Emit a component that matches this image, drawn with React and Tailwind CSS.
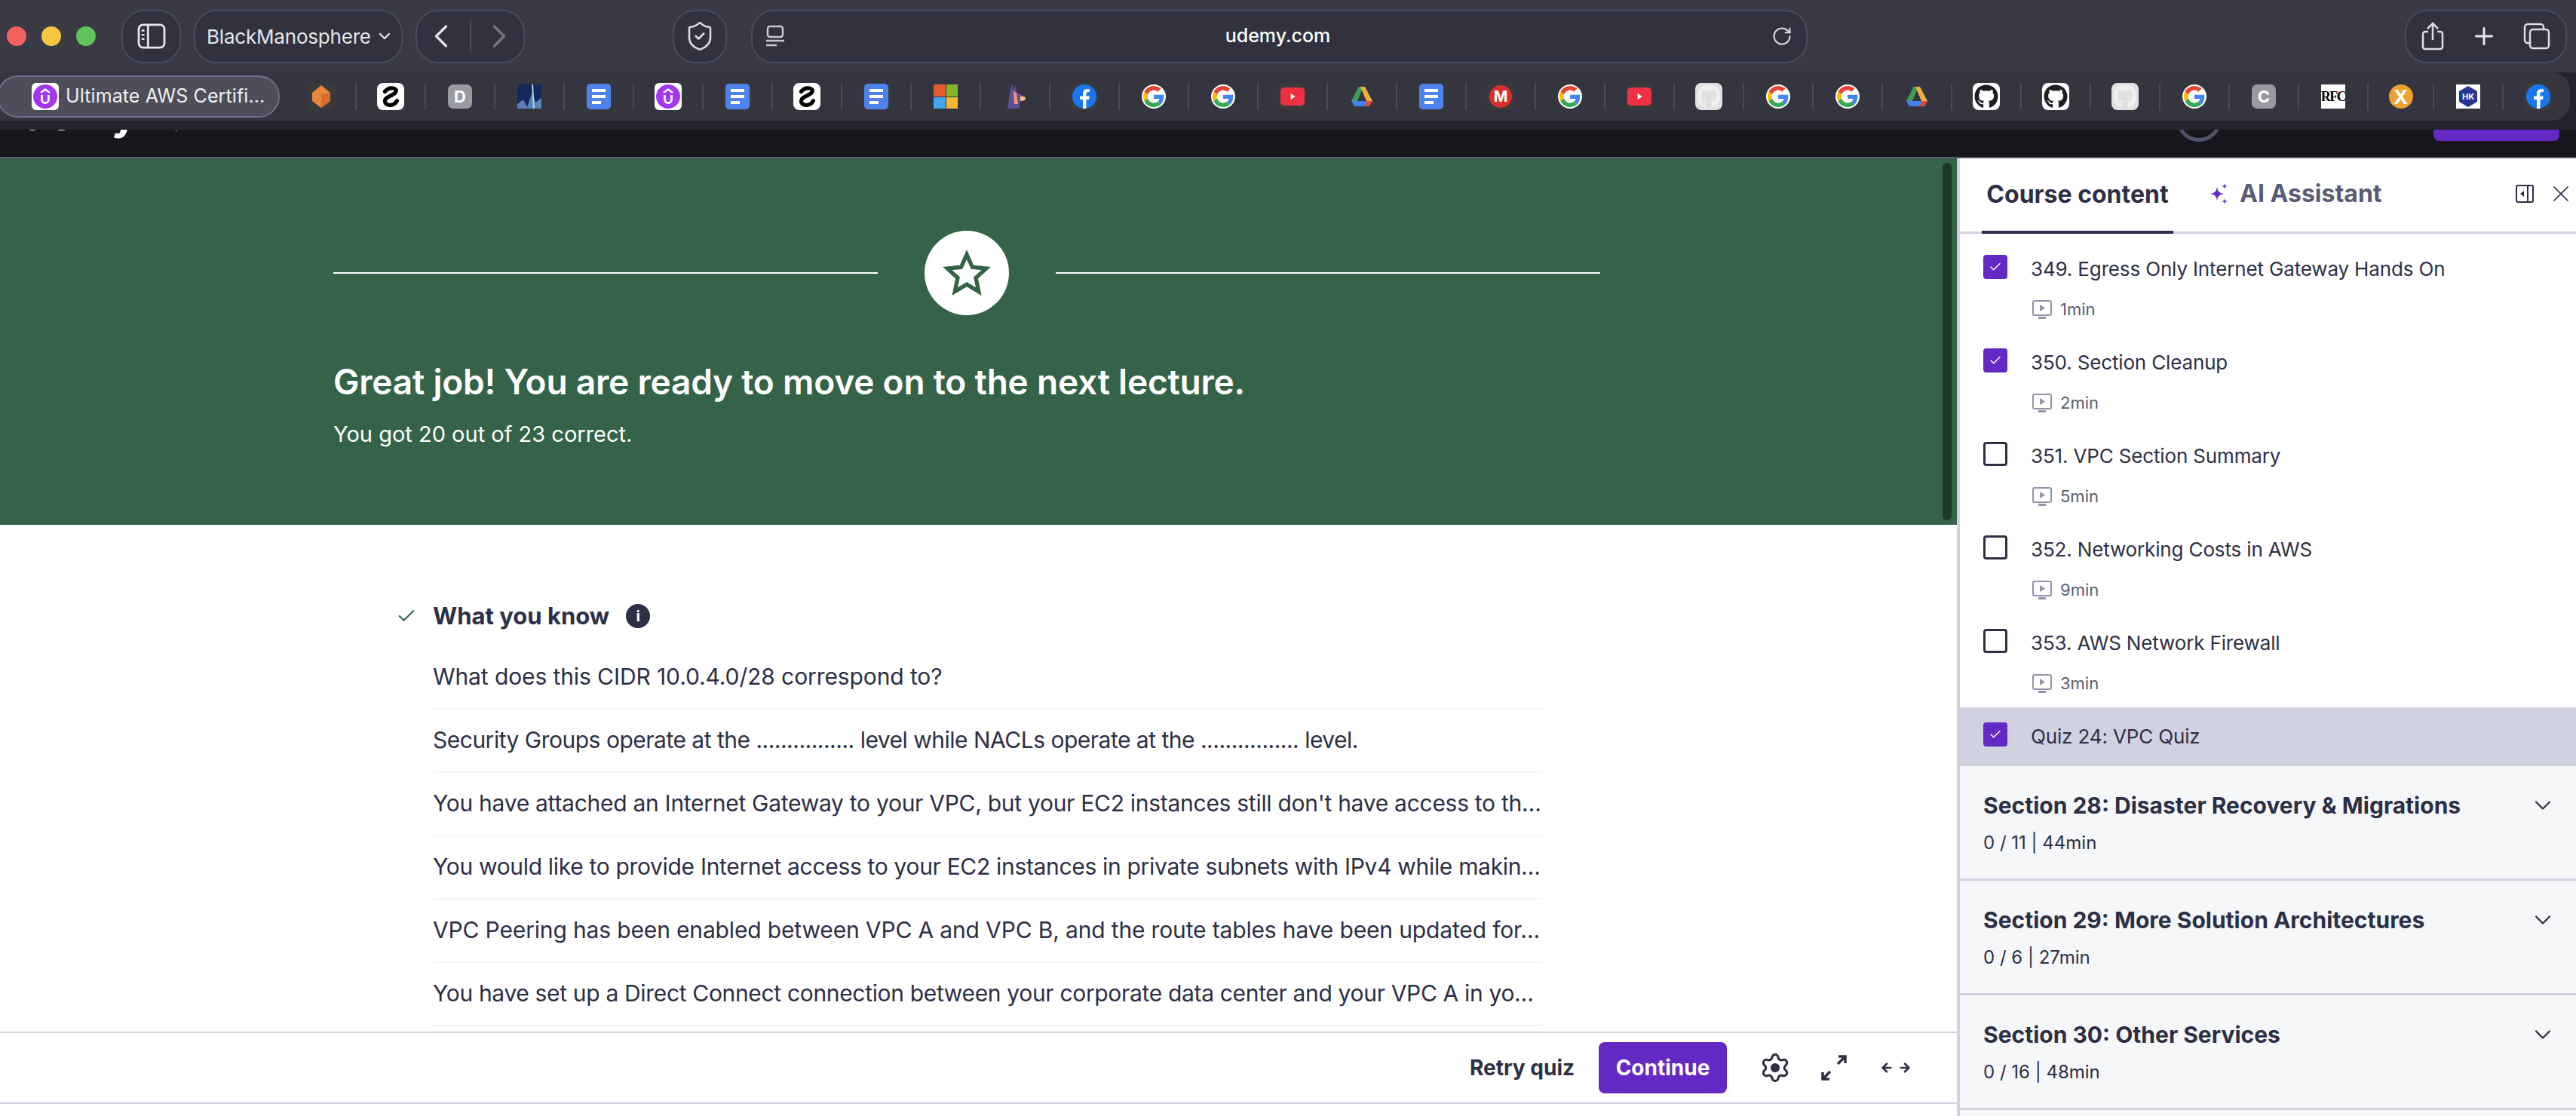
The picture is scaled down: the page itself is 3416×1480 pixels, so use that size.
import React from 'react';
import { ChevronDown, ChevronLeft, ChevronRight, ShieldCheck, RotateCw, Plus, Check, X, ArrowLeft, ArrowRight } from 'lucide-react';
import { FaGithub } from 'react-icons/fa';

function Frame({ className = '', children }) {
  return <div className={`w-[32px] h-[32px] flex items-center justify-center overflow-hidden ${className}`}>{children}</div>;
}

function GoogleIcon() {
  return (
    <Frame className="bg-white rounded-full">
      <svg viewBox="0 0 48 48" className="w-[28px] h-[28px]">
        <path fill="#EA4335" d="M24 9.5c3.5 0 6.700 1.200 9.200 3.600l6.900-6.900C35.900 2.400 30.500 0 24 0 14.600 0 6.500 5.400 2.600 13.200l8 6.200C12.400 13.700 17.700 9.500 24 9.500z" />
        <path fill="#4285F4" d="M46.900 24.500c0-1.600-.1-3.100-.4-4.500H24v9h12.900c-.6 3-2.200 5.500-4.700 7.200l7.700 6c4.500-4.200 7-10.300 7-17.700z" />
        <path fill="#FBBC05" d="M10.500 28.600c-.5-1.400-.8-3-.8-4.600s.3-3.200.8-4.600l-8-6.200C.9 16.500 0 20.100 0 24s.9 7.500 2.600 10.800l7.900-6.200z" />
        <path fill="#34A853" d="M24 48c6.500 0 11.900-2.100 15.900-5.800l-7.700-6c-2.200 1.400-4.900 2.300-8.200 2.300-6.300 0-11.600-4.200-13.500-9.900l-8 6.200C6.500 42.600 14.600 48 24 48z" />
      </svg>
    </Frame>
  );
}

function DocsIcon() {
  return (
    <div className="w-[36px] h-[36px] rounded-[8px] bg-[#3a3a3c] flex items-center justify-center">
      <div className="w-[32px] h-[34px] rounded-[5px] bg-[#4e83ee] flex flex-col justify-center gap-[4px] px-[7px]">
        <div className="h-[4px] bg-white" />
        <div className="h-[4px] bg-white" />
        <div className="h-[4px] w-[12px] bg-white" />
      </div>
    </div>
  );
}

function UdemyIcon() {
  return (
    <div className="w-[36px] h-[36px] rounded-[6px] bg-white flex items-center justify-center shrink-0">
      <svg viewBox="0 0 34 34" className="w-[34px] h-[34px]">
        <circle cx="17" cy="17" r="16" fill="#a435f0" />
        <path d="M11 12 L17 7.500 L23 12" fill="none" stroke="white" strokeWidth="2.500" />
        <path d="M12.500 15 V21 a4.500 4.500 0 0 0 9 0 V15" fill="none" stroke="white" strokeWidth="2.800" />
      </svg>
    </div>
  );
}

function SquiggleIcon() {
  return (
    <div className="w-[36px] h-[36px] rounded-[8px] bg-white flex items-center justify-center">
      <svg viewBox="0 0 34 34" className="w-[32px] h-[32px]">
        <path d="M9 10 C15 2 28 5 24 11 C21 16 9 17 9 23 C9 31 22 31 26 23" fill="none" stroke="black" strokeWidth="5.500" strokeLinecap="round" />
      </svg>
    </div>
  );
}

function YoutubeIcon() {
  return (
    <div className="w-[36px] h-[36px] rounded-[8px] bg-[#3a3a3c] flex items-center justify-center">
      <div className="w-[32px] h-[24px] rounded-[5px] bg-[#ee3142] flex items-center justify-center">
        <svg viewBox="0 0 10 10" className="w-[12px] h-[12px]"><path d="M3 1.500 L8 5 L3 8.500 Z" fill="white" /></svg>
      </div>
    </div>
  );
}

function DriveIcon() {
  return (
    <svg viewBox="0 0 32 32" className="w-[32px] h-[32px]">
      <path d="M11.500 3 H18 L10 22 H2 Z" fill="#3f9b55" />
      <path d="M14 3 H20 L30 22 H22 Z" fill="#eeb03c" />
      <path d="M2 22 H22 L20 29 H6 Z" fill="#4482ed" />
      <path d="M22 22 H30 L26 29 H20 Z" fill="#d9503f" />
    </svg>
  );
}

function FacebookIcon() {
  return (
    <div className="w-[36px] h-[36px] rounded-[8px] bg-[#3a3a3c] flex items-center justify-center">
      <svg viewBox="0 0 32 32" className="w-[32px] h-[32px]">
        <circle cx="16" cy="16" r="16" fill="#1877f2" />
        <path d="M14 32 V20 H10 V15.500 H14 V12 C14 8 16.500 6 20 6 L23 6.300 V10 H21 C19 10 18.500 11 18.500 12.500 V15.500 H22.800 L22 20 H18.500 V32 Z" fill="white" />
      </svg>
    </div>
  );
}

function GithubIcon({ ghost }) {
  return (
    <div className={`w-[36px] h-[36px] rounded-[8px] flex items-center justify-center ${ghost ? 'bg-[#e1e1e1]' : 'bg-white'}`}>
      <FaGithub className={`w-[32px] h-[32px] ${ghost ? 'text-[#f0f0f0]' : 'text-[#1b1f23]'}`} />
    </div>
  );
}

function Favicon({ name }) {
  switch (name) {
    case 'crystal':
      return (
        <div className="w-[36px] h-[36px] rounded-[8px] bg-[#3a3a3c] flex items-center justify-center">
          <svg viewBox="0 0 32 32" className="w-[32px] h-[32px]">
            <path d="M16 1 L28 11 V22 L16 31 L4 22 V11 Z" fill="#e8873a" />
            <path d="M16 13 L28 11 V22 L16 31 Z" fill="#d96a30" />
          </svg>
        </div>
      );
    case 'squiggle':
      return <SquiggleIcon />;
    case 'd':
      return <Frame className="bg-[#9a9aa2] rounded-[7px] text-white font-bold text-[22px]">D</Frame>;
    case 'c':
      return <Frame className="bg-[#9a9aa2] rounded-[7px] text-white font-bold text-[22px]">C</Frame>;
    case 'blue':
      return (
        <svg viewBox="0 0 32 32" className="w-[32px] h-[32px]">
          <rect width="32" height="32" fill="#12295c" />
          <path d="M0 26 L8 20 L13 30 L20 10 L24 24 L32 18 V32 H0 Z" fill="#5b82b8" />
          <path d="M20 0 L22 32" stroke="#b8cfe6" strokeWidth="2" />
        </svg>
      );
    case 'docs':
      return <DocsIcon />;
    case 'udemy':
      return <UdemyIcon />;
    case 'ms':
      return (
        <div className="w-[32px] h-[32px] grid grid-cols-2 gap-[1px]">
          <div className="bg-[#e45c30]" />
          <div className="bg-[#86b42f]" />
          <div className="bg-[#44a6ee]" />
          <div className="bg-[#f7b733]" />
        </div>
      );
    case 'llama':
      return (
        <svg viewBox="0 0 32 32" className="w-[32px] h-[32px]">
          <path d="M6 32 L10 6 L12 0 L14 8 L16 0 L18 10 L26 15 L30 17 L29 21 L22 23 L22 32 Z" fill="#5c4f96" />
          <path d="M14 8 L18 12 L20 26 H15 Z" fill="#ee8f80" />
          <path d="M23 15 L30 17 L29 21 L23 22 Z" fill="#f0c27a" />
        </svg>
      );
    case 'fb':
      return <FacebookIcon />;
    case 'g':
      return <GoogleIcon />;
    case 'yt':
      return <YoutubeIcon />;
    case 'drive':
      return <DriveIcon />;
    case 'mega':
      return (
        <div className="w-[36px] h-[36px] rounded-[8px] bg-[#3a3a3c] flex items-center justify-center">
          <div className="w-[30px] h-[30px] rounded-full bg-[#d9302a] flex items-center justify-center text-white font-bold text-[20px]">M</div>
        </div>
      );
    case 'gh':
      return <GithubIcon />;
    case 'ghost':
      return <GithubIcon ghost />;
    case 'rfc':
      return <Frame className="bg-white text-black font-bold text-[18px] font-['Liberation_Serif',serif] tracking-[-1.5px]">RFC</Frame>;
    case 'x':
      return <Frame className="bg-[#f0a030] rounded-full text-white font-bold text-[26px]">X</Frame>;
    case 'hk':
      return (
        <Frame className="bg-white">
          <svg viewBox="0 0 32 32" className="w-[32px] h-[32px]">
            <path d="M16 2 L28 9 V23 L16 30 L4 23 V9 Z" fill="#25388e" />
            <text x="16" y="20" fontSize="11" fontWeight="700" fill="white" textAnchor="middle">HK</text>
          </svg>
        </Frame>
      );
    default:
      return null;
  }
}

const tabs = [
  'crystal', 'squiggle', 'd', 'blue', 'docs', 'udemy', 'docs', 'squiggle', 'docs', 'ms', 'llama',
  'fb', 'g', 'g', 'yt', 'drive', 'docs', 'mega', 'g', 'yt', 'ghost', 'g', 'g', 'drive', 'gh', 'gh',
  'ghost', 'g', 'c', 'rfc', 'x', 'hk', 'fb',
];

function SidebarIcon() {
  return (
    <svg viewBox="0 0 40 36" className="w-[38px] h-[34px]" fill="none" stroke="#e4e4e8" strokeWidth="3">
      <rect x="2" y="2" width="36" height="32" rx="6" />
      <path d="M15 2 V34" />
      <path d="M6 10 H10 M6 16 H10 M6 22 H10" strokeWidth="2.500" />
    </svg>
  );
}

function ReaderIcon() {
  return (
    <svg viewBox="0 0 24 30" className="w-[24px] h-[30px]" fill="none" stroke="#c8c8cf" strokeWidth="2.500">
      <rect x="2" y="2" width="20" height="14" rx="3" />
      <path d="M0 21 H24 M0 27 H14" />
    </svg>
  );
}

function ShareIcon() {
  return (
    <svg viewBox="0 0 30 38" className="w-[30px] h-[38px]" fill="none" stroke="#dedee2" strokeWidth="2.500">
      <path d="M9 13 H5 a3 3 0 0 0 -3 3 V33 a3 3 0 0 0 3 3 H25 a3 3 0 0 0 3 -3 V16 a3 3 0 0 0 -3 -3 H21" />
      <path d="M15 24 V2 M8 9 L15 2 L22 9" />
    </svg>
  );
}

function TabsIcon() {
  return (
    <svg viewBox="0 0 36 36" className="w-[36px] h-[36px]" fill="none" stroke="#dedee2" strokeWidth="2.500">
      <rect x="9" y="9" width="25" height="25" rx="4" />
      <path d="M9 27 H6 a4 4 0 0 1 -4 -4 V6 a4 4 0 0 1 4 -4 H23 a4 4 0 0 1 4 4 V9" />
    </svg>
  );
}

function ToolbarPill({ className = '', children }) {
  return (
    <div className={`h-[71px] rounded-[30px] border-2 border-[#484a62] bg-[#31323d] flex items-center ${className}`}>
      {children}
    </div>
  );
}

function BrowserChrome() {
  return (
    <div className="bg-[#23232d]">
      <div className="h-[96px] bg-[#3a3a44] flex items-center pl-[9px]">
        <div className="flex gap-[20px]">
          <div className="w-[26px] h-[26px] rounded-full bg-[#f0625f]" />
          <div className="w-[26px] h-[26px] rounded-full bg-[#f6c73f]" />
          <div className="w-[26px] h-[26px] rounded-full bg-[#60c45c]" />
        </div>
        <ToolbarPill className="w-[79px] ml-[34px] justify-center"><SidebarIcon /></ToolbarPill>
        <ToolbarPill className="w-[277px] ml-[17px] pl-[15px] gap-[6px] text-[#e6e6ea] text-[26px]">
          <span className="tracking-[-0.2px]">BlackManosphere</span>
          <ChevronDown className="w-[24px] h-[24px]" strokeWidth={2.25} />
        </ToolbarPill>
        <ToolbarPill className="w-[145px] ml-[17px] justify-between px-[6px]">
          <ChevronLeft className="w-[52px] h-[52px] text-[#e6e6ea]" strokeWidth={1.5} />
          <div className="w-[2px] h-[44px] bg-[#4a4b58]" />
          <ChevronRight className="w-[52px] h-[52px] text-[#77777f]" strokeWidth={1.5} />
        </ToolbarPill>
        <ToolbarPill className="w-[72px] ml-[196px] justify-center">
          <ShieldCheck className="w-[42px] h-[42px] text-[#d8d8dc]" strokeWidth={1.5} />
        </ToolbarPill>
        <ToolbarPill className="w-[1401px] ml-[32px] px-[18px] justify-between text-white text-[25px]">
          <ReaderIcon />
          <span className="font-medium">udemy.com</span>
          <RotateCw className="w-[28px] h-[28px] text-[#d8d8dc]" strokeWidth={1.75} />
        </ToolbarPill>
        <ToolbarPill className="w-[215px] ml-[792px] justify-between px-[20px]">
          <ShareIcon />
          <Plus className="w-[36px] h-[36px] text-[#e6e6ea]" strokeWidth={2} />
          <TabsIcon />
        </ToolbarPill>
      </div>
      <div className="h-[64px] mr-[8px] bg-[#35353f] rounded-r-[24px] flex items-center">
        <div className="w-[375px] h-[56px] -ml-[4px] mr-[10px] rounded-[28px] border-2 border-[#6e6e8c] bg-[#4e4e5a] flex items-center pl-[44px] gap-[9px] text-[#eeeef0] text-[25px] tracking-[0.1px] shrink-0">
          <UdemyIcon />
          <span className="whitespace-nowrap">Ultimate AWS Certifi...</span>
        </div>
        {tabs.map((name, i) => (
          <div key={i} className={`h-[36px] flex items-center justify-center shrink-0 ${i === 30 ? 'w-[87px]' : 'w-[92px]'} ${i < tabs.length - 1 ? 'border-r-2 border-[#4a4a54]' : ''}`}>
            <Favicon name={name} />
          </div>
        ))}
      </div>
      <div className="h-[12px]" />
    </div>
  );
}

// What is left of the site's own nav, mostly hidden behind the tab bar
function SiteNavStrip() {
  return (
    <div className="h-[38px] bg-[#16161c] border-b-2 border-[#5a5a70] relative overflow-hidden shrink-0">
      <span className="absolute left-[-6px] top-[-54px] text-white font-bold text-[56px] leading-[68px]">udemy</span>
      <div className="absolute left-[233px] top-0 w-[1px] h-[3px] bg-[#8a8a98]" />
      <div className="absolute left-[2886px] top-[-44px] w-[60px] h-[60px] rounded-full border-[5px] border-[#50526a]" />
      <div className="absolute left-[3227px] top-[-20px] w-[167px] h-[35px] rounded-b-[8px] bg-[#6429c5]" />
    </div>
  );
}

function Hero() {
  return (
    <div className="h-[486px] bg-[#356347] pl-[442px] relative text-white">
      <div className="flex items-center gap-[62px] pt-[96px] w-[1680px]">
        <div className="flex-1 h-[2px] bg-white" />
        <div className="w-[112px] h-[112px] rounded-full bg-white flex items-center justify-center shrink-0">
          <svg viewBox="0 0 24 24" className="w-[64px] h-[64px]" fill="none" stroke="#356347" strokeWidth="2" strokeLinejoin="miter">
            <path d="M12 2.800 L14.800 9.100 L21.600 9.800 L16.500 14.400 L17.900 21.200 L12 17.700 L6.100 21.200 L7.500 14.400 L2.400 9.800 L9.200 9.100 Z" />
          </svg>
        </div>
        <div className="flex-1 h-[2px] bg-white" />
      </div>
      <h1 className="mt-[60px] text-[46px] leading-[56px] font-semibold tracking-[-0.2px] whitespace-nowrap">Great job! You are ready to move on to the next lecture.</h1>
      <p className="mt-[24px] text-[29px] leading-[36px] whitespace-nowrap">You got 20 out of 23 correct.</p>
      <div className="absolute right-[7px] top-[6px] w-[12px] h-[474px] rounded-full bg-[#1d3a24]" />
    </div>
  );
}

// tracking per line keeps each line ending where the reference cuts it
const questions = [
  { text: 'What does this CIDR 10.0.4.0/28 correspond to?', tracking: 'tracking-[-0.1px]' },
  { text: 'Security Groups operate at the ................ level while NACLs operate at the ................ level.', tracking: 'tracking-[-0.5px]' },
  { text: "You have attached an Internet Gateway to your VPC, but your EC2 instances still don't have access to th…", tracking: 'tracking-[-0.28px]' },
  { text: 'You would like to provide Internet access to your EC2 instances in private subnets with IPv4 while makin…', tracking: 'tracking-[-0.32px]' },
  { text: 'VPC Peering has been enabled between VPC A and VPC B, and the route tables have been updated for…', tracking: 'tracking-[-0.15px]' },
  { text: 'You have set up a Direct Connect connection between your corporate data center and your VPC A in yo…', tracking: 'tracking-[-0.33px]' },
];

function Results() {
  return (
    <div className="flex-1 bg-white pl-[525px] pt-[99px] overflow-hidden">
      <div className="flex items-center h-[44px]">
        <Check className="w-[28px] h-[28px] text-[#356347] mr-[21px]" strokeWidth={1.75} />
        <span className="text-[#2d2f45] font-bold text-[31px]">What you know</span>
        <div className="ml-[22px] w-[32px] h-[32px] rounded-full bg-[#2d2f45] flex items-center justify-center text-white text-[20px] font-bold">i</div>
      </div>
      <div className="ml-[49px] w-[1471px] mt-[18px]">
        {questions.map((q) => (
          <div key={q.text} className={`h-[84px] border-b-2 border-[#f6f7f9] flex items-center text-[#2d2f45] text-[30px] whitespace-nowrap pb-[2px] ${q.tracking}`}>
            {q.text}
          </div>
        ))}
      </div>
    </div>
  );
}

function ExpandIcon() {
  return (
    <svg viewBox="0 0 36 36" className="w-[36px] h-[36px]" fill="none" stroke="#2d2f45" strokeWidth="3.500">
      <path d="M24 3 H33 V12 M33 3 L23 13" />
      <path d="M12 33 H3 V24 M3 33 L13 23" />
    </svg>
  );
}

function GearIcon() {
  return (
    <svg viewBox="0 0 24 24" className="w-[42px] h-[42px]" fill="none" stroke="#2d2f45" strokeWidth="1.75">
      <path d="M9.671 4.136a2.34 2.34 0 0 1 4.659 0 2.34 2.34 0 0 0 3.319 1.915 2.34 2.34 0 0 1 2.33 4.033 2.34 2.34 0 0 0 0 3.831 2.34 2.34 0 0 1-2.33 4.033 2.34 2.34 0 0 0-3.319 1.915 2.34 2.34 0 0 1-4.659 0 2.34 2.34 0 0 0-3.32-1.915 2.34 2.34 0 0 1-2.33-4.033 2.34 2.34 0 0 0 0-3.831A2.34 2.34 0 0 1 6.35 6.051a2.34 2.34 0 0 0 3.319-1.915" />
      <circle cx="12" cy="12" r="3.500" fill="#2d2f45" stroke="none" />
    </svg>
  );
}

function BottomBar() {
  return (
    <div className="h-[96px] mb-[16px] border-y-2 border-[#d1d2e0] bg-white flex items-center shrink-0 pl-[1949px]">
      <span className="text-[#2d2f45] font-bold text-[28px] w-[171px]">Retry quiz</span>
      <div className="w-[170px] h-[68px] rounded-[8px] bg-[#6429c5] text-white font-bold text-[28px] flex items-center justify-center">Continue</div>
      <div className="ml-[43px]"><GearIcon /></div>
      <div className="ml-[39px]"><ExpandIcon /></div>
      <div className="ml-[43px] flex gap-[6px] text-[#2d2f45]">
        <ArrowLeft className="w-[18px] h-[18px]" strokeWidth={3.5} />
        <ArrowRight className="w-[18px] h-[18px]" strokeWidth={3.5} />
      </div>
    </div>
  );
}

function PlayIcon() {
  return (
    <svg viewBox="0 0 26 25" className="w-[26px] h-[25px]" fill="none" stroke="#9194ac" strokeWidth="2">
      <rect x="1" y="1" width="24" height="19" rx="2" />
      <path d="M10 6 L17 10.500 L10 15 Z" fill="#9194ac" stroke="none" />
      <path d="M8 23.500 H18" strokeWidth="3" />
    </svg>
  );
}

function Checkbox({ checked }) {
  if (checked) {
    return (
      <div className="w-[32px] h-[32px] rounded-[4px] bg-[#6429c5] flex items-center justify-center shrink-0">
        <Check className="w-[18px] h-[18px] text-white" strokeWidth={2} />
      </div>
    );
  }
  return <div className="w-[32px] h-[32px] rounded-[4px] border-[3px] border-[#2d2f45] bg-white shrink-0" />;
}

const lectures = [
  { title: '349. Egress Only Internet Gateway Hands On', time: '1min', done: true },
  { title: '350. Section Cleanup', time: '2min', done: true },
  { title: '351. VPC Section Summary', time: '5min', done: false },
  { title: '352. Networking Costs in AWS', time: '9min', done: false },
  { title: '353. AWS Network Firewall', time: '3min', done: false },
];

const sections = [
  { title: 'Section 28: Disaster Recovery & Migrations', meta: '0 / 11 | 44min' },
  { title: 'Section 29: More Solution Architectures', meta: '0 / 6 | 27min' },
  { title: 'Section 30: Other Services', meta: '0 / 16 | 48min' },
];

function Sidebar() {
  return (
    <div className="w-[821px] border-l-4 border-[#d1d2e0] bg-white flex flex-col shrink-0">
      <div className="h-[100px] border-b-[3px] border-[#d1d2e0] flex items-end pl-[29px] relative">
        <div className="w-[254px] h-[100px] border-b-[4px] border-[#2d2f45] -mb-[3px] flex items-center justify-center text-[#2d2f45] font-bold text-[32px] whitespace-nowrap">Course content</div>
        <div className="h-[100px] ml-[48px] flex items-center gap-[14px] text-[#595c73] font-bold text-[32px] whitespace-nowrap">
          <svg viewBox="0 0 26 30" className="w-[26px] h-[30px]" fill="#6429c5">
            <path d="M10 6 C11 12 13 14 19 15 C13 16 11 18 10 24 C9 18 7 16 1 15 C7 14 9 12 10 6 Z" />
            <path d="M20 1 C20.500 4 21 4.500 24 5 C21 5.500 20.500 6 20 9 C19.500 6 19 5.500 16 5 C19 4.500 19.500 4 20 1 Z" />
            <path d="M20 21 C20.500 24 21 24.500 24 25 C21 25.500 20.500 26 20 29 C19.500 26 19 25.500 16 25 C19 24.500 19.500 24 20 21 Z" />
          </svg>
          <span>AI Assistant</span>
        </div>
        <div className="absolute right-[2px] top-[29px] flex items-center gap-[18px]">
          <svg viewBox="0 0 24 26" className="w-[24px] h-[26px]" fill="none" stroke="#2d2f45" strokeWidth="2">
            <rect x="1" y="2" width="22" height="22" rx="2" />
            <path d="M16 2 V24" />
            <path d="M11 9 L6 13 L11 17 Z" fill="#2d2f45" stroke="none" />
          </svg>
          <X className="w-[36px] h-[36px] text-[#2d2f45]" strokeWidth={1.1} />
        </div>
      </div>
      <div className="pt-[8px]">
        {lectures.map((l) => (
          <div key={l.title} className="h-[124px] pt-[20px] pl-[31px] flex gap-[31px]">
            <Checkbox checked={l.done} />
            <div>
              <div className="text-[#2d2f45] text-[26px] tracking-[-0.15px] leading-[38px] whitespace-nowrap">{l.title}</div>
              <div className="flex items-center gap-[11px] mt-[18px] pl-[2px] text-[#595c73] text-[22px] leading-[32px]">
                <PlayIcon />
                <span>{l.time}</span>
              </div>
            </div>
          </div>
        ))}
        <div className="h-[78px] bg-[#d1d2e0] pl-[31px] pt-[20px] flex gap-[31px]">
          <Checkbox checked />
          <div className="text-[#2d2f45] text-[26px] tracking-[-0.15px] leading-[38px]">Quiz 24: VPC Quiz</div>
        </div>
      </div>
      <div className="flex-1 bg-[#f6f7f9]">
        {sections.map((s) => (
          <div key={s.title} className="h-[152px] border-b-[3px] border-[#d1d2e0] pl-[31px] pr-[26px] pt-[30px]">
            <div className="flex items-center justify-between h-[44px]">
              <span className="text-[#2d2f45] font-bold text-[30px] whitespace-nowrap">{s.title}</span>
              <ChevronDown className="w-[36px] h-[36px] text-[#2d2f45]" strokeWidth={1.5} />
            </div>
            <div className="mt-[12px] text-[#2d2f45] text-[24px] leading-[32px] whitespace-pre">{s.meta}</div>
          </div>
        ))}
      </div>
    </div>
  );
}

export default function App() {
  return (
    <div className="w-[3416px] h-[1480px] flex flex-col overflow-hidden font-['Inter',sans-serif]">
      <BrowserChrome />
      <SiteNavStrip />
      <div className="flex-1 flex min-h-0">
        <div className="flex-1 flex flex-col min-w-0">
          <Hero />
          <Results />
          <BottomBar />
        </div>
        <Sidebar />
      </div>
    </div>
  );
}
